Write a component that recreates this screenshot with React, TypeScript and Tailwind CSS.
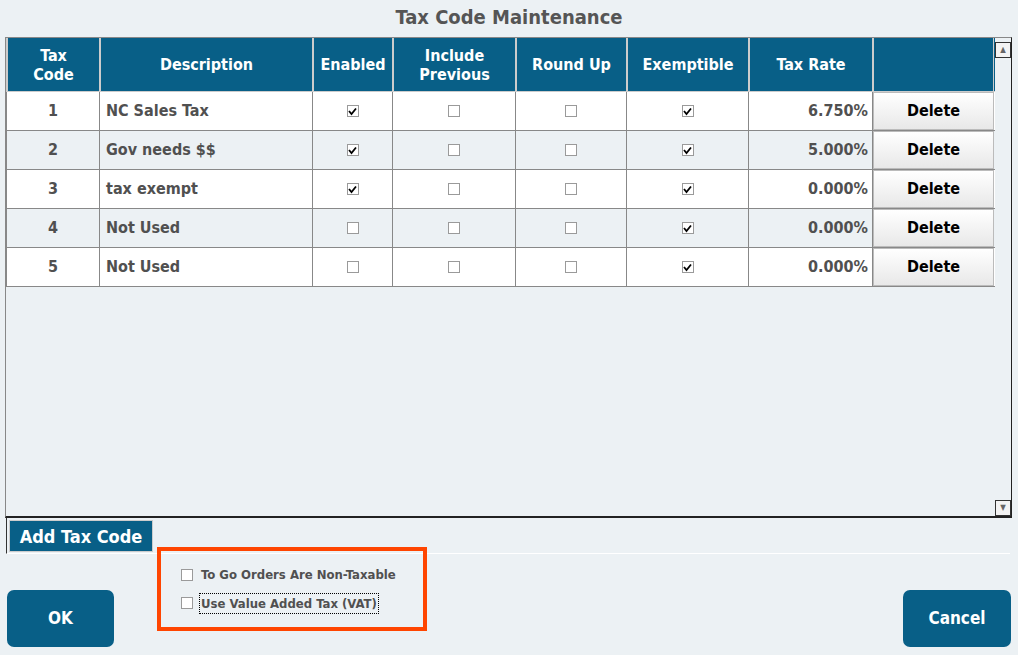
import React from "react";

const rows = [
  { c: 1, d: "NC Sales Tax", e: true, r: "6.750%" },
  { c: 2, d: "Gov needs $$", e: true, r: "5.000%" },
  { c: 3, d: "tax exempt", e: true, r: "0.000%" },
  { c: 4, d: "Not Used", e: false, r: "0.000%" },
  { c: 5, d: "Not Used", e: false, r: "0.000%" },
];

const Cb = ({ on }: { on: boolean }) => (
  <span className="inline-flex w-[12px] h-[12px] border border-[#9a9a9a] bg-white items-center justify-center">
    {on && (
      <svg width="9" height="9" viewBox="0 0 9 9">
        <path d="M1 4 L3.5 7 L8 1.5" stroke="#000" strokeWidth="1.8" fill="none" />
      </svg>
    )}
  </span>
);

const cols = "grid grid-cols-[94px_213px_80px_123px_111px_122px_124px_121px]";

export default function App() {
  return (
    <div
      className="w-[1018px] h-[655px] bg-[#ecf1f4] relative overflow-hidden"
      style={{ fontFamily: '"DejaVu Sans Condensed","DejaVu Sans",sans-serif' }}
    >
      <div className="h-[37px] flex items-center justify-center pb-[3px] text-[20px] font-bold text-[#555]">
        Tax Code Maintenance
      </div>
      <div className="mx-[5px] w-[1007px] h-[481px] border border-[#888] border-r-[#222] border-b-2 border-b-[#222] bg-[#ecf1f4] flex">
        <div className="w-[989px]">
          <div className={`${cols} bg-[#085f87] text-white font-bold text-[16px] h-[54px] border-b border-[#ccc]`}>
            {["Tax\nCode", "Description", "Enabled", "Include\nPrevious", "Round Up", "Exemptible", "Tax Rate", ""].map((h, i) => (
              <div key={i} className="flex items-center justify-center text-center leading-[19px] whitespace-pre border-r border-[#ccc] border-l first:border-l-2">
                {h}
              </div>
            ))}
          </div>
          {rows.map((r, i) => (
            <div key={i} className={`${cols} h-[39px] text-[16px] font-bold text-[#505050] ${i % 2 ? "bg-[#ecf1f4]" : "bg-white"} border-b border-[#888]`}>
              <div className="flex items-center justify-center border-x border-[#888]">{r.c}</div>
              <div className="flex items-center px-[6px] border-r border-[#888]">{r.d}</div>
              <div className="flex items-center justify-center border-r border-[#888]"><Cb on={r.e} /></div>
              <div className="flex items-center justify-center border-r border-[#888]"><Cb on={false} /></div>
              <div className="flex items-center justify-center border-r border-[#888]"><Cb on={false} /></div>
              <div className="flex items-center justify-center border-r border-[#888]"><Cb on={true} /></div>
              <div className="flex items-center justify-end pr-[4px] border-r border-[#888]">{r.r}</div>
              <div className="flex items-center justify-center bg-gradient-to-b from-white to-[#e8e8e8] border border-[#bbb] text-black">Delete</div>
            </div>
          ))}
        </div>
        <div className="w-[16px] flex flex-col justify-between bg-[#ecf1f4] ml-auto">
          <div className="h-[16px] border border-[#333] bg-[#f3f3f3] mt-[4px] flex items-center justify-center text-[8px] text-[#666]">▲</div>
          <div className="h-[16px] border border-[#333] bg-[#f3f3f3] flex items-center justify-center text-[8px] text-[#666]">▼</div>
        </div>
      </div>
      <div className="mx-[6px] w-[1004px] h-[36px] border-l border-[#333] border-b border-b-white flex items-start">
        <div className="mt-[2px] ml-[2px] w-[144px] h-[32px] bg-[#085f87] text-white font-bold text-[18px] flex items-center justify-center border border-[#ccc]">
          Add Tax Code
        </div>
      </div>
      <div className="flex items-end justify-between px-[7px] h-[93px] pb-0">
        <button className="w-[107px] h-[57px] rounded-[7px] bg-[#085f87] text-white font-bold text-[17px]">OK</button>
        <div className="self-start -mt-[7px] mr-auto ml-[43px] w-[270px] h-[84px] border-[4px] border-[#ff4500] pl-[20px] pt-[14px] flex flex-col gap-[8px] text-[13px] font-bold text-[#505050]">
          <div className="flex items-center gap-[8px]"><Cb on={false} /><span>To Go Orders Are Non-Taxable</span></div>
          <div className="flex items-center gap-[6px]"><Cb on={false} /><span className="border border-dotted border-black px-[1px]">Use Value Added Tax (VAT)</span></div>
        </div>
        <button className="w-[108px] h-[57px] rounded-[7px] bg-[#085f87] text-white font-bold text-[17px]">Cancel</button>
      </div>
    </div>
  );
}
